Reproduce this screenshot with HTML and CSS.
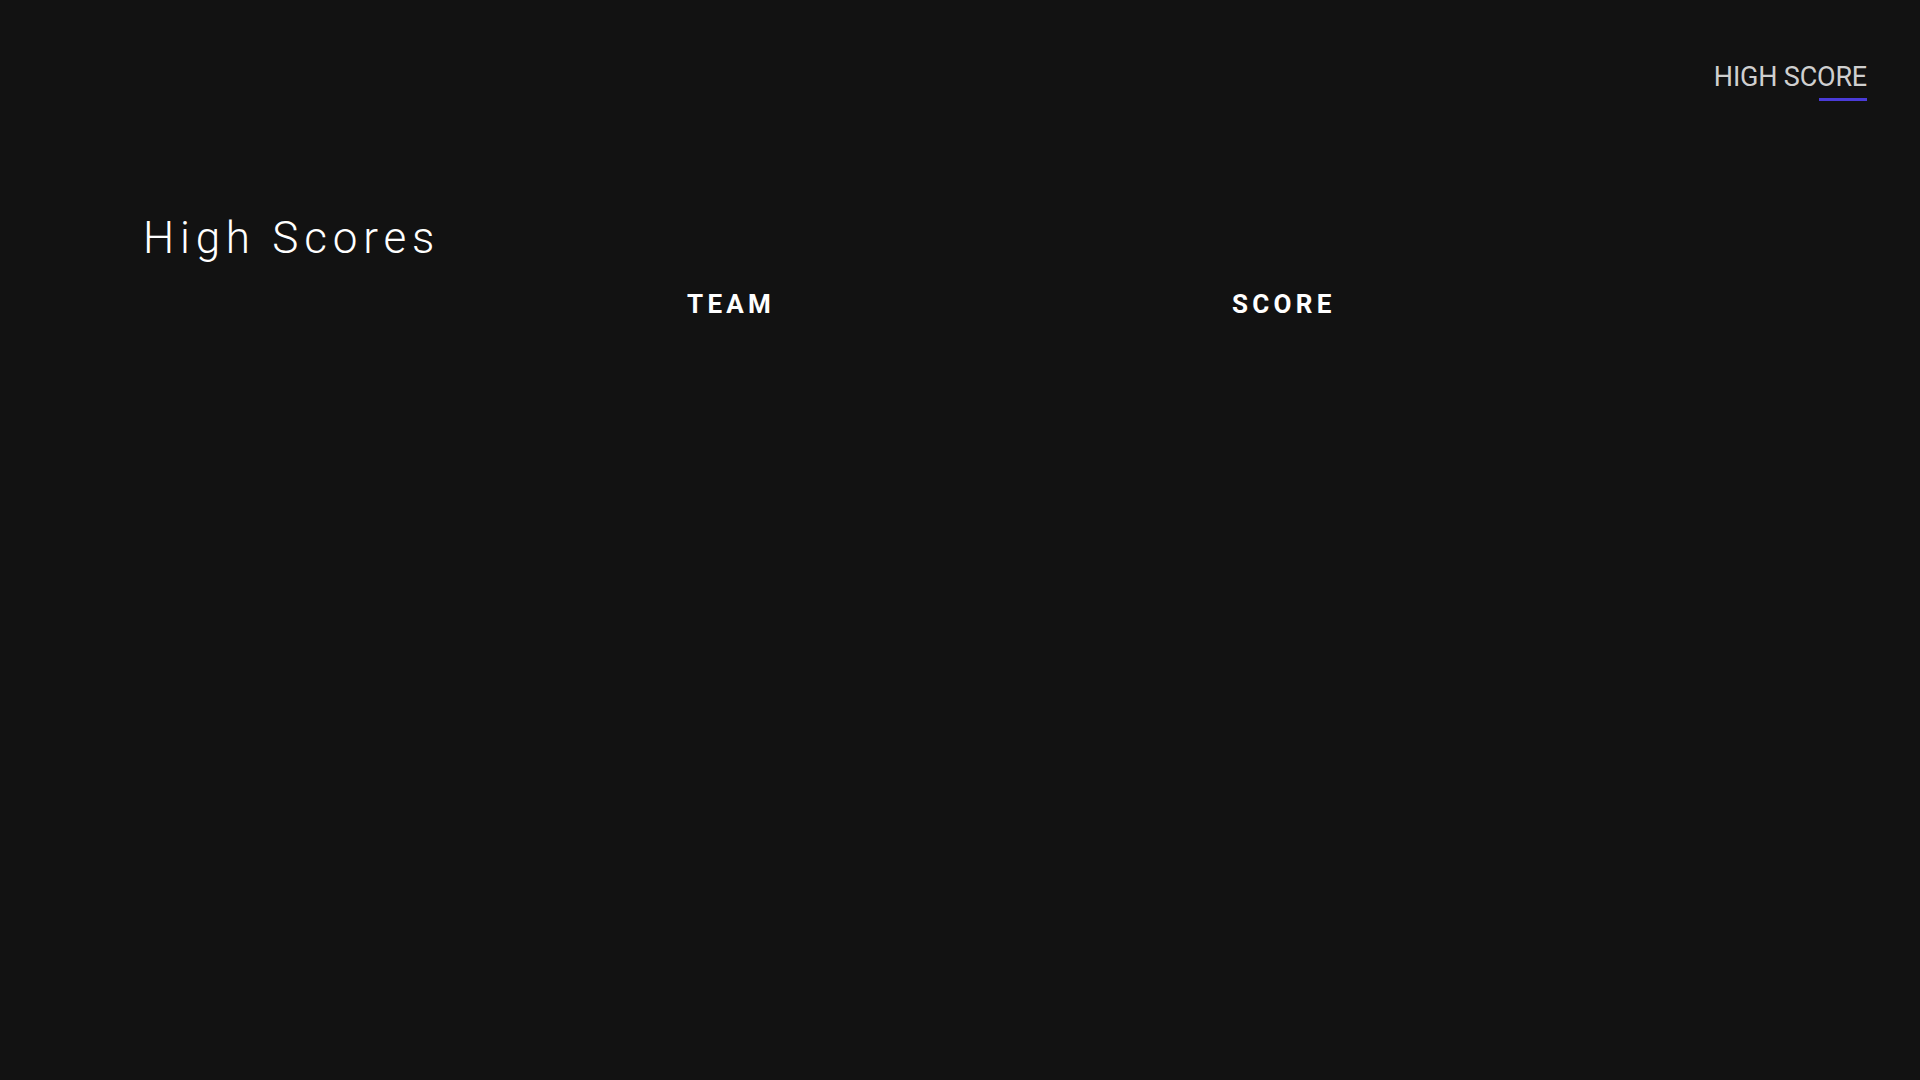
FILE: index.html
```html
<!DOCTYPE html>
<html>
<head>
<meta charset="utf-8">
<link rel="stylesheet" href="styles.css">
</head>
<body>
<header class="nav">
  <a class="nav-link">HIGH <span class="active">SCORE</span></a>
</header>
<main class="content">
  <h1 class="title">High Scores</h1>
  <div class="table-head">
    <div class="col col-team">TEAM</div>
    <div class="col col-score">SCORE</div>
  </div>
</main>
</body>
</html>
```
FILE: styles.css
```css
html, body {
  margin: 0;
  padding: 0;
  background: #121212;
  height: 100%;
}
body {
  font-family: Roboto, "Liberation Sans", sans-serif;
  color: #fff;
}
.nav {
  display: flex;
  justify-content: flex-end;
  padding: 61px 53px 0 0;
}
.nav-link {
  font-size: 27px;
  font-weight: 400;
  color: #cfcfcf;
  line-height: 32px;
  position: relative;
  letter-spacing: -0.2px;
}
.nav-link .active {
  position: relative;
}
.nav-link .active::after {
  content: "";
  position: absolute;
  width: 48px;
  right: 0;
  bottom: -8px;
  height: 3px;
  background: #4a3bd8;
}
.content {
  padding: 0 0 0 143px;
}
.title {
  margin: 119px 0 0 0;
  font-size: 44px;
  font-weight: 300;
  letter-spacing: 5.8px;
  line-height: 52px;
}
.table-head {
  display: flex;
  margin-top: 25px;
}
.col {
  font-size: 26px;
  font-weight: 700;
  letter-spacing: 4.3px;
  line-height: 30px;
}
.col-team {
  margin-left: 544px;
  width: 545px;
}
```
